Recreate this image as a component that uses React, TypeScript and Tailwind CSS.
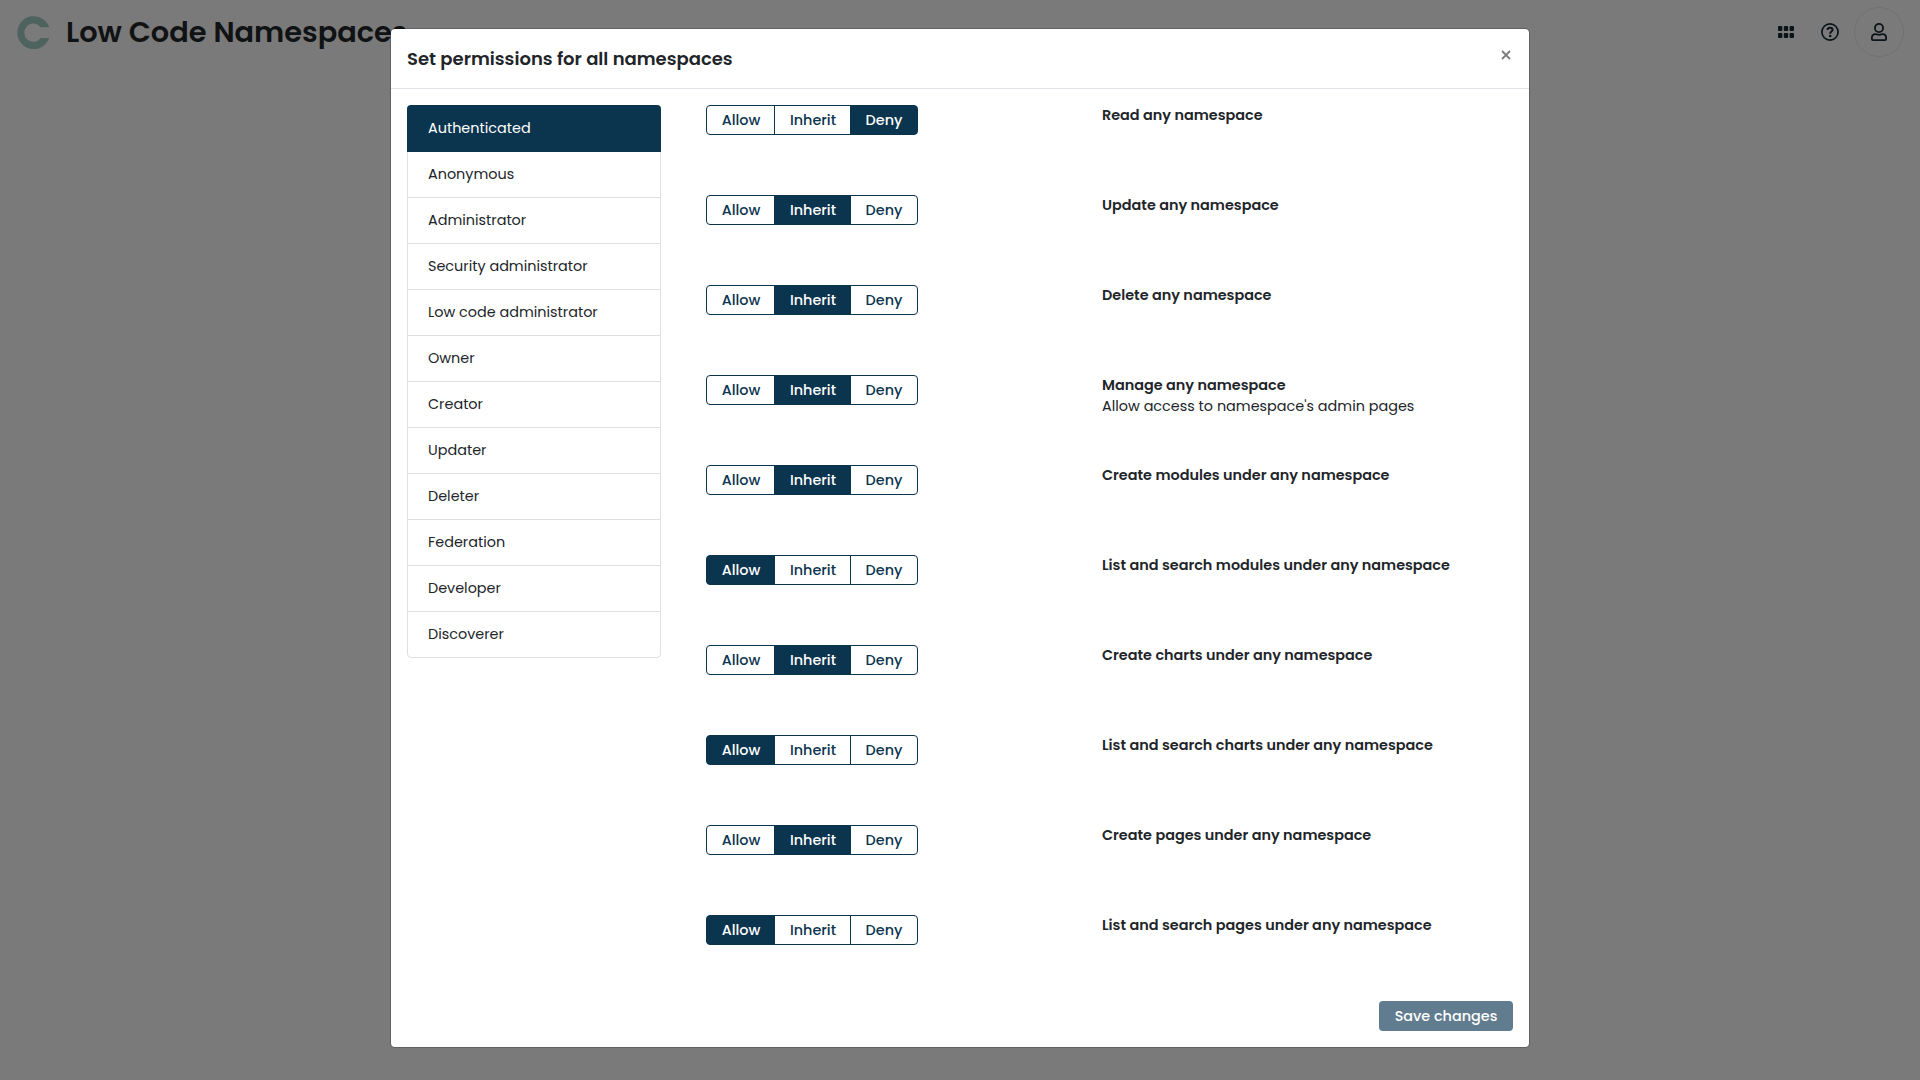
import { useState } from "react";

const roles = [
  "Authenticated", "Anonymous", "Administrator", "Security administrator",
  "Low code administrator", "Owner", "Creator", "Updater", "Deleter",
  "Federation", "Developer", "Discoverer",
];

type Access = "Allow" | "Inherit" | "Deny";

const initial: { title: string; note?: string; access: Access }[] = [
  { title: "Read any namespace", access: "Deny" },
  { title: "Update any namespace", access: "Inherit" },
  { title: "Delete any namespace", access: "Inherit" },
  { title: "Manage any namespace", note: "Allow access to namespace's admin pages", access: "Inherit" },
  { title: "Create modules under any namespace", access: "Inherit" },
  { title: "List and search modules under any namespace", access: "Allow" },
  { title: "Create charts under any namespace", access: "Inherit" },
  { title: "List and search charts under any namespace", access: "Allow" },
  { title: "Create pages under any namespace", access: "Inherit" },
  { title: "List and search pages under any namespace", access: "Allow" },
];

const options: { name: Access; shape: string }[] = [
  { name: "Allow", shape: "w-[69px] rounded-l pl-px" },
  { name: "Inherit", shape: "-ml-px w-[77px] pl-px" },
  { name: "Deny", shape: "-ml-px w-[68px] rounded-r" },
];

function TopBar() {
  return (
    <header className="flex h-16 items-center justify-between pl-[17px] pr-4 text-[#0b1519]">
      <div className="flex items-center gap-[16px]">
        <svg width="33" height="33" viewBox="0 0 33 33">
          <path d="M32.2 11.3H23.7A9 9.2 0 1 0 23.7 22H32.2A16.4 16.5 0 1 1 32.2 11.3Z" fill="#4e635e" />
        </svg>
        <h1 className="whitespace-nowrap text-[28.8px] font-semibold leading-9 text-[#101214]">Low Code Namespaces</h1>
      </div>
      <div className="flex items-center">
        <svg className="mr-[27px]" width="16" height="12" viewBox="0 0 16 12" fill="currentColor">
          <rect width="4.4" height="5" rx="1" /><rect x="5.8" width="4.4" height="5" rx="1" /><rect x="11.6" width="4.4" height="5" rx="1" />
          <rect y="7" width="4.4" height="5" rx="1" /><rect x="5.8" y="7" width="4.4" height="5" rx="1" /><rect x="11.6" y="7" width="4.4" height="5" rx="1" />
        </svg>
        <svg className="mr-[15px]" width="18" height="18" viewBox="0 0 18 18" fill="none" stroke="currentColor">
          <circle cx="9" cy="9" r="8.1" strokeWidth="1.7" />
          <path d="M6.4 6.9C6.7 5.3 7.7 4.7 9 4.7c1.5 0 2.6.9 2.6 2.1 0 1.7-2.3 1.8-2.3 3.5v.5" strokeWidth="2" />
          <circle cx="9.2" cy="13" r="1.3" fill="currentColor" stroke="none" />
        </svg>
        <div className="flex size-[50px] items-center justify-center rounded-full border border-[#717171]">
          <svg width="16" height="18" viewBox="0 0 16 18" fill="none" stroke="currentColor" strokeWidth="1.8">
            <circle cx="8" cy="5" r="4.1" />
            <path d="M4.5 11.2c1.2 0 1.8.6 3.5.6s2.3-.6 3.5-.6c2 0 3.6 1.5 3.6 3.6v1.3c0 .6-.4 1-1 1H1.9c-.6 0-1-.4-1-1v-1.3c0-2.1 1.6-3.6 3.6-3.6z" />
          </svg>
        </div>
      </div>
    </header>
  );
}

export default function App() {
  const [role, setRole] = useState("Authenticated");
  const [rows, setRows] = useState(initial);
  return (
    <div className="relative h-[1080px] w-[1920px] overflow-hidden bg-[#7a7a7a] font-['Poppins','Inter',sans-serif] text-[14.4px] text-[#212529]">
      <TopBar />
      <div className="absolute inset-0 flex justify-center py-7">
        <section className="flex h-[1020px] w-[1140px] flex-col rounded-[5px] border border-black/20 bg-white bg-clip-padding">
          <header className="flex h-[60px] shrink-0 items-center justify-between border-b border-[#dee2e6] px-4">
            <h2 className="text-[18px] font-semibold">Set permissions for all namespaces</h2>
            <button aria-label="Close" className="mb-2 mr-0.5 text-[#7a7c7e]">
              <svg width="10" height="10" viewBox="0 0 10 10" stroke="currentColor" strokeWidth="1.8"><path d="M1 1l8 8M9 1L1 9" /></svg>
            </button>
          </header>
          <main className="flex min-h-0 flex-1 px-4 pt-4">
            <nav className="flex h-[553px] w-[254px] flex-col rounded border border-[#dfdfdf]">
              {roles.map((r) => (
                <button key={r} onClick={() => setRole(r)}
                  className={role === r
                    ? "-mx-px -mt-px h-[47px] shrink-0 bg-[#0b344e] px-[21px] text-left text-white first:rounded-t last:rounded-b"
                    : "h-[46px] shrink-0 border-b border-[#dfdfdf] px-5 text-left last:border-b-0"}>
                  {r}
                </button>
              ))}
            </nav>
            <div className="ml-[45px] flex flex-1 flex-col">
              {rows.map((row, i) => (
                <div key={row.title} className="flex h-[90px] shrink-0 items-start">
                  <div className="flex w-[396px]">
                    {options.map((o) => (
                      <button key={o.name}
                        onClick={() => setRows(rows.map((x, j) => (j === i ? { ...x, access: o.name } : x)))}
                        className={`h-[30px] border border-[#0b344e] font-medium leading-[22px] ${o.shape} ${row.access === o.name ? "bg-[#0b344e] text-white" : "text-[#0b344e]"}`}>
                        {o.name}
                      </button>
                    ))}
                  </div>
                  <div className="leading-[21px]">
                    <div className="font-semibold">{row.title}</div>
                    {row.note && <div>{row.note}</div>}
                  </div>
                </div>
              ))}
            </div>
          </main>
          <footer className="flex shrink-0 justify-end px-4 pb-4">
            <button className="h-[30px] w-[134px] rounded bg-[#617c8e] font-medium leading-[22px] text-white">Save changes</button>
          </footer>
        </section>
      </div>
    </div>
  );
}
